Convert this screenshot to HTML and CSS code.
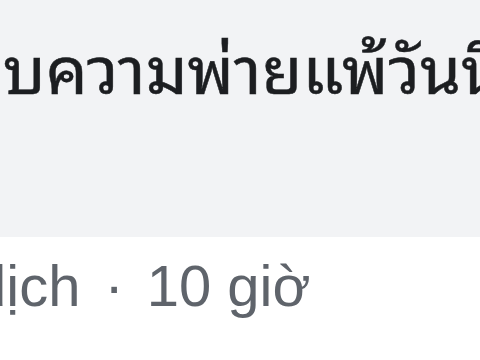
FILE: index.html
```html
<!DOCTYPE html>
<html lang="th">
<head>
<meta charset="utf-8">
<link rel="stylesheet" href="styles.css">
</head>
<body>
<div class="page">
  <div class="bubble">
    <p class="comment">บความพ่ายแพ้วันนี้</p>
  </div>
  <div class="meta" lang="vi">
    <span class="see">dịch</span>
    <span class="dot">·</span>
    <span class="time">10 giờ</span>
  </div>
</div>
</body>
</html>
```
FILE: styles.css
```css
html, body {
  margin: 0;
  padding: 0;
  background: #ffffff;
  width: 480px;
  height: 360px;
  overflow: hidden;
}
.page {
  width: 480px;
  height: 360px;
  overflow: hidden;
}
.bubble {
  background: #f2f3f5;
  height: 237px;
  box-sizing: border-box;
  padding-top: 14px;
  overflow: hidden;
}
.comment {
  margin: 0 0 0 3px;
  white-space: nowrap;
  font-family: "Noto Sans Thai Looped", "Liberation Serif", serif;
  font-size: 66px;
  line-height: 100px;
  color: #1c1e21;
  -webkit-text-stroke: 0.5px #1c1e21;
}
.meta {
  display: flex;
  align-items: baseline;
  margin-left: -26px;
  padding-top: 14px;
  white-space: nowrap;
  font-family: "Liberation Sans", Arial, sans-serif;
  font-size: 58px;
  line-height: 70px;
  color: #5f646b;
}
.dot {
  margin-left: 24px;
}
.time {
  margin-left: 23px;
}
```
